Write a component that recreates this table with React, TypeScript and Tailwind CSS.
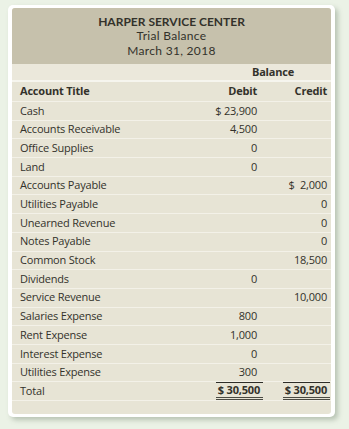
import React from "react";

type Row = { t: string; d?: string; c?: string };

const rows: Row[] = [
  { t: "Cash", d: "$ 23,900" },
  { t: "Accounts Receivable", d: "4,500" },
  { t: "Office Supplies", d: "0" },
  { t: "Land", d: "0" },
  { t: "Accounts Payable", c: "$  2,000" },
  { t: "Utilities Payable", c: "0" },
  { t: "Unearned Revenue", c: "0" },
  { t: "Notes Payable", c: "0" },
  { t: "Common Stock", c: "18,500" },
  { t: "Dividends", d: "0" },
  { t: "Service Revenue", c: "10,000" },
  { t: "Salaries Expense", d: "800" },
  { t: "Rent Expense", d: "1,000" },
  { t: "Interest Expense", d: "0" },
  { t: "Utilities Expense", d: "300" },
];

export default function App() {
  return (
    <div
      className="w-[349px] h-[429px] bg-[#ebf2e6] pt-[5px] pl-[8px] text-[#33322b]"
      style={{ fontFamily: '"Open Sans", "Noto Sans", sans-serif' }}
    >
      <div className="w-[327px] h-[412px] bg-white rounded-[5px] pt-[3px] px-[4px] pb-[3px] shadow-[3px_3px_5px_rgba(90,110,85,0.35)]">
        <div className="h-full rounded-[3px] bg-[#e7e4d5] overflow-hidden flex flex-col">
          <div
            className="h-[56px] bg-[#c6c1ac] flex flex-col items-center justify-center leading-[14.5px] pt-[1px]"
            style={{ fontFamily: 'Lato, "Open Sans", sans-serif' }}
          >
            <div className="text-[12px] font-bold">HARPER SERVICE CENTER</div>
            <div className="text-[12px] tracking-[0.3px]">Trial Balance</div>
            <div className="text-[12px] tracking-[0.3px]">March 31, 2018</div>
          </div>
          <div className="h-[18px] bg-[#ebe8db] grid grid-cols-[1fr_70px_70px] pr-[4px] items-center text-[11px] font-bold tracking-[-0.2px] border-b-2 border-[#f6f5ee]">
            <div />
            <div className="col-span-2 text-center pl-[32px]">Balance</div>
          </div>
          <div className="h-[20px] grid grid-cols-[1fr_70px_70px] pl-[8px] pr-[4px] items-center text-[11px] font-bold tracking-[-0.2px] border-b border-[#f3f1e8]">
            <div>Account Title</div>
            <div className="text-right">Debit</div>
            <div className="text-right">Credit</div>
          </div>
          {rows.map((r) => (
            <div
              key={r.t}
              className="h-[18.7px] grid grid-cols-[1fr_70px_70px] pl-[8px] pr-[4px] items-center text-[11px] tracking-[-0.2px] border-b border-[#f3f1e8]"
            >
              <div>{r.t}</div>
              <div className="text-right whitespace-pre">{r.d ?? ""}</div>
              <div className="text-right whitespace-pre">{r.c ?? ""}</div>
            </div>
          ))}
          <div className="h-[18.7px] grid grid-cols-[1fr_70px_70px] pl-[8px] pr-[1px] items-center text-[11px] tracking-[-0.2px] border-b border-[#f3f1e8]">
            <div>Total</div>
            <div className="flex justify-end">
              <span className="font-bold border-t border-b-[3px] border-b-[#4a4a42] border-[#2e2d27] border-double pl-[2px] pr-[3px] leading-[14px] mr-[-3px]">
                $ 30,500
              </span>
            </div>
            <div className="flex justify-end">
              <span className="font-bold border-t border-b-[3px] border-b-[#4a4a42] border-[#2e2d27] border-double pl-[2px] pr-[3px] leading-[14px]">
                $ 30,500
              </span>
            </div>
          </div>
          <div className="flex-1" />
        </div>
      </div>
    </div>
  );
}
